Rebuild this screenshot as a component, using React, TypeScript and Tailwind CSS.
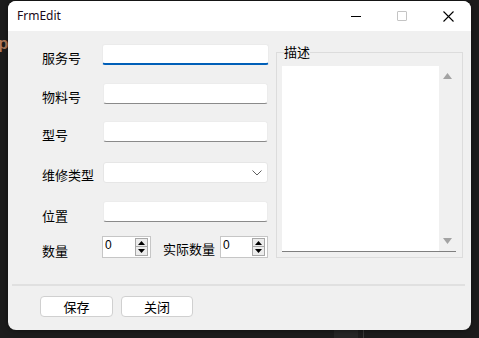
import React from "react";

const cjk = { fontFamily: '"Noto Sans CJK SC", "Noto Sans", sans-serif' };

function Label({ text, mt }: { text: string; mt: string }) {
  return (
    <div className={`w-[61px] shrink-0 text-[13px] leading-[18px] text-black ${mt}`} style={cjk}>
      {text}
    </div>
  );
}

function TextBox({ focused }: { focused?: boolean }) {
  if (focused) {
    return (
      <div className="-ml-px h-[21px] w-[167px] shrink-0 rounded-[3px] border border-[#ebebeb] border-b-2 border-b-[#005fb8] bg-white" />
    );
  }
  return <div className="h-[21px] w-[165px] shrink-0 rounded-[3px] border border-[#ececec] border-b-[#8a8a8a] bg-white" />;
}

function Spin({ w }: { w: string }) {
  return (
    <div className={`flex h-[22px] ${w} shrink-0 items-start border border-[#c6c6c6] bg-white`}>
      <div className="flex-1 pl-[2px] pt-[1px] text-[12px] leading-[14px] text-black" style={{ fontFamily: '"Liberation Sans", sans-serif' }}>
        0
      </div>
      <div className="mr-[2px] mt-[1px] flex w-[13px] flex-col">
        <div className="flex h-[9px] items-center justify-center border border-[#a8a8a8] bg-[#ececec]">
          <svg width="7" height="4" viewBox="0 0 7 4"><polygon points="3.5,0 7,4 0,4" fill="#000" /></svg>
        </div>
        <div className="flex h-[9px] items-center justify-center border border-t-0 border-[#a8a8a8] bg-[#ececec]">
          <svg width="7" height="4" viewBox="0 0 7 4"><polygon points="0,0 7,0 3.5,4" fill="#000" /></svg>
        </div>
      </div>
    </div>
  );
}

export default function App() {
  return (
    <div className="relative h-[338px] w-[479px] overflow-hidden bg-[#1c1c1c]">
      <div
        className="absolute left-[-2px] top-[34px] text-[17px] font-bold leading-[20px] text-[#b07a5a]"
        style={{ fontFamily: '"Liberation Sans", sans-serif' }}
      >
        p
      </div>
      <div className="absolute left-[334px] top-[330px] h-[8px] w-[24px] bg-[#262626]" />
      <div className="absolute left-[363px] top-[330px] h-[8px] w-[1px] bg-[#3a3a3a]" />
      <div className="relative ml-[8px] mt-[1px] flex h-[329px] w-[463px] flex-col overflow-hidden rounded-[8px] bg-[#f0f0f0] shadow-[0_0_6px_rgba(0,0,0,0.5)]">
        {/* Title bar */}
        <div className="flex h-[30px] shrink-0 items-center bg-white">
          <div
            className="flex-1 pl-[9px] text-[12px] leading-[16px] text-[#1a0a1a]"
            style={{ fontFamily: '"Noto Sans", "Open Sans", sans-serif' }}
          >
            FrmEdit
          </div>
          <div className="flex h-[30px] w-[46px] items-center justify-center">
            <div className="h-px w-[10px] bg-black" />
          </div>
          <div className="flex h-[30px] w-[46px] items-center justify-center">
            <div className="h-[10px] w-[10px] rounded-[1px] border border-[#c4c4c4]" />
          </div>
          <div className="flex h-[30px] w-[46px] items-center justify-center">
            <svg width="11" height="11" viewBox="0 0 11 11">
              <path d="M0.5 0.5 L10.5 10.5 M10.5 0.5 L0.5 10.5" stroke="#000" strokeWidth="1.1" />
            </svg>
          </div>
        </div>

        {/* Content */}
        <div className="flex items-start pl-[34px]">
          {/* Left column */}
          <div className="flex flex-col pt-[13px]">
            <div className="flex h-[21px] items-start">
              <Label text="服务号" mt="mt-[5px]" />
              <TextBox focused />
            </div>
            <div className="mt-[18px] flex h-[21px] items-start">
              <Label text="物料号" mt="mt-[5px]" />
              <TextBox />
            </div>
            <div className="mt-[17px] flex h-[21px] items-start">
              <Label text="型号" mt="mt-[5px]" />
              <TextBox />
            </div>
            <div className="mt-[20px] flex h-[21px] items-start">
              <Label text="维修类型" mt="mt-[4px]" />
              <div className="flex h-[21px] w-[165px] shrink-0 items-center justify-end rounded-[3px] border border-[#e6e6e6] bg-white pr-[5px]">
                <svg width="10" height="6" viewBox="0 0 10 6">
                  <path d="M0.5 0.5 L5 5 L9.5 0.5" stroke="#5f5f5f" strokeWidth="1" fill="none" />
                </svg>
              </div>
            </div>
            <div className="mt-[18px] flex h-[21px] items-start">
              <Label text="位置" mt="mt-[6px]" />
              <TextBox />
            </div>
            <div className="mt-[14px] flex h-[22px] items-start">
              <div className="mt-[6px] w-[60px] shrink-0 text-[13px] leading-[18px] text-black" style={cjk}>
                数量
              </div>
              <Spin w="w-[49px]" />
              <div className="ml-[12px] mt-[4px] w-[57px] shrink-0 text-[13px] leading-[18px] text-black" style={cjk}>
                实际数量
              </div>
              <Spin w="w-[48px]" />
            </div>
          </div>

          {/* Group box */}
          <div className="relative ml-[7px] mt-[21px] h-[206px] w-[187px] border border-[#dcdcdc] pl-[5px] pr-[6px] pt-[13px]">
            <div
              className="absolute left-[7px] top-[-10px] bg-[#f0f0f0] text-[13px] leading-[18px] text-black"
              style={cjk}
            >
              描述
            </div>
            <div className="flex h-[186px] w-[174px] border-b border-b-[#7f7f7f] bg-white">
              <div className="flex-1" />
              <div className="flex w-[17px] flex-col items-center justify-between bg-[#f0f0f0] py-[7px]">
                <svg width="9" height="6" viewBox="0 0 9 6"><polygon points="4.5,0 9,6 0,6" fill="#a3a3a3" /></svg>
                <svg width="9" height="6" viewBox="0 0 9 6"><polygon points="0,0 9,0 4.5,6" fill="#a3a3a3" /></svg>
              </div>
            </div>
          </div>
        </div>

        {/* Separator */}
        <div className="ml-[4px] mt-[26px] h-[2px] w-[453px] bg-[#e0e0e0]" />

        {/* Buttons */}
        <div className="mt-[10px] flex gap-[8px] pl-[32px]">
          <div
            className="flex h-[21px] w-[73px] items-center justify-center rounded-[4px] border border-[#d0d0d0] bg-white text-[13px] leading-[18px] text-black"
            style={cjk}
          >
            保存
          </div>
          <div
            className="flex h-[21px] w-[72px] items-center justify-center rounded-[4px] border border-[#d0d0d0] bg-white text-[13px] leading-[18px] text-black"
            style={cjk}
          >
            关闭
          </div>
        </div>
      </div>
    </div>
  );
}
